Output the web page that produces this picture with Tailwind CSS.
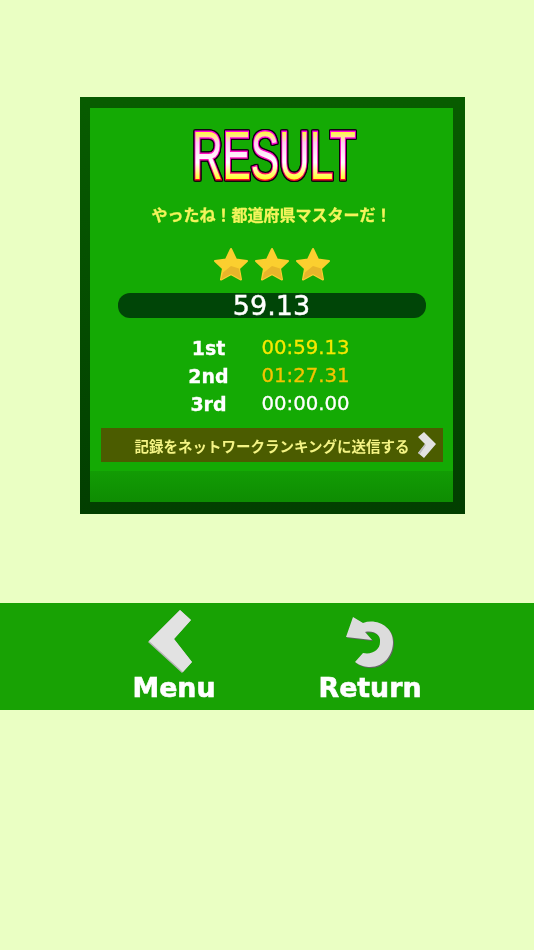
<!DOCTYPE html>
<html lang="ja">
<head>
  <meta charset="UTF-8" />
  <title>Result</title>
  <script src="https://cdn.jsdelivr.net/npm/@tailwindcss/browser@4"></script>
</head>
<body class="bg-[#eaffc3] h-[950px] overflow-hidden font-['DejaVu_Sans','Noto_Sans_CJK_JP',sans-serif]">

  <!-- Result card -->
  <div class="mt-[97px] ml-[80px] w-[385px] h-[417px] pt-[11px] pb-[12px] pl-[10px] pr-[12px] bg-gradient-to-b from-[#085c00] to-[#023e00] blur-[0.5px]">
    <div class="h-full bg-[#14aa04] flex flex-col items-center">
      <svg class="mt-[12px] overflow-visible" width="200" height="70" viewBox="0 0 200 70">
        <defs>
          <linearGradient id="fillGrad" gradientUnits="userSpaceOnUse" x1="0" y1="10" x2="0" y2="60">
            <stop offset="0" stop-color="#ffff20" />
            <stop offset="0.25" stop-color="#ffd0f0" />
            <stop offset="0.65" stop-color="#ffffff" />
            <stop offset="1" stop-color="#ffff20" />
          </linearGradient>
          <linearGradient id="strokeGrad" gradientUnits="userSpaceOnUse" x1="0" y1="10" x2="0" y2="60">
            <stop offset="0" stop-color="#ff00e0" />
            <stop offset="0.7" stop-color="#ff10b0" />
            <stop offset="1" stop-color="#ff1020" />
          </linearGradient>
        </defs>
        <text x="20" y="59" textLength="164" lengthAdjust="spacingAndGlyphs" font-family="Liberation Sans" font-size="68" fill="url(#fillGrad)" stroke="url(#strokeGrad)" stroke-width="3" paint-order="stroke" class="[filter:drop-shadow(1px_0_0_#100010)_drop-shadow(-1px_0_0_#100010)_drop-shadow(0_1px_0_#100010)_drop-shadow(0_-1px_0_#100010)]">RESULT</text>
      </svg>

      <p class="mt-[14px] h-[24px] text-[16px] leading-[24px] font-bold text-[#f4f45c] whitespace-nowrap [-webkit-text-stroke:0.3px_#f4f45c]">やったね&#xFF01;都道府県マスターだ&#xFF01;</p>

      <!-- Stars -->
      <div class="mt-[18px] flex gap-[5px] h-[36px]">
        <svg width="36" height="36" viewBox="0 0 36 36"><path d="M18 3l5 10.5 11 1.5-8 7.5 2 11-10-5.5-10 5.5 2-11-8-7.5 11-1.5z" fill="#fbcf2f" stroke="#fbcf2f" stroke-width="2" stroke-linejoin="round"/><path d="M18 20l8 2.5 2 11-10-5.5-10 5.5 2-7z" fill="#e8b52a"/></svg>
        <svg width="36" height="36" viewBox="0 0 36 36"><path d="M18 3l5 10.5 11 1.5-8 7.5 2 11-10-5.5-10 5.5 2-11-8-7.5 11-1.5z" fill="#fbcf2f" stroke="#fbcf2f" stroke-width="2" stroke-linejoin="round"/><path d="M18 20l8 2.5 2 11-10-5.5-10 5.5 2-7z" fill="#e8b52a"/></svg>
        <svg width="36" height="36" viewBox="0 0 36 36"><path d="M18 3l5 10.5 11 1.5-8 7.5 2 11-10-5.5-10 5.5 2-11-8-7.5 11-1.5z" fill="#fbcf2f" stroke="#fbcf2f" stroke-width="2" stroke-linejoin="round"/><path d="M18 20l8 2.5 2 11-10-5.5-10 5.5 2-7z" fill="#e8b52a"/></svg>
      </div>

      <!-- Time bar -->
      <div class="mt-[11px] w-[308px] h-[25px] rounded-[12px] bg-[#004507] flex items-center justify-center text-white text-[27px] leading-none [-webkit-text-stroke:0.4px_white]">59.13</div>

      <!-- Rankings -->
      <div class="mt-[16px] w-[200px] grid grid-cols-[74px_1fr] gap-x-[16px] text-[19.7px] leading-[28px] text-white [-webkit-text-stroke:0.3px]">
        <span class="text-center font-bold text-[19px]">1st</span><span class="text-[#f6e800]">00:59.13</span>
        <span class="text-center font-bold text-[19px]">2nd</span><span class="text-[#f4c400]">01:27.31</span>
        <span class="text-center font-bold text-[19px]">3rd</span><span>00:00.00</span>
      </div>

      <!-- Send button -->
      <div class="mt-[10px] w-[342px] h-[34px] bg-[#4b5c00] flex items-center justify-end pr-[6px] gap-[7px]">
        <span class="pt-[6px] text-[14.5px] font-bold text-[#f4f484] whitespace-nowrap">記録をネットワークランキングに送信する</span>
        <svg width="20" height="28" viewBox="0 0 20 28"><path d="M1 6l6-5 12 12-12 14-6-5 7-9z" fill="#e2e2e2"/><path d="M1 22l7-9 1 1-6 9z" fill="#bdbdbd"/></svg>
      </div>

      <!-- Footer strip -->
      <div class="mt-auto w-full h-[31px] bg-gradient-to-b from-[#129c04] to-[#0e8c02]"></div>
    </div>
  </div>

  <!-- Bottom nav -->
  <nav class="mt-[89px] h-[107px] bg-[#18a204] flex pl-[76px] text-white font-bold text-[26.8px] leading-none blur-[0.4px] [-webkit-text-stroke:0.6px_white]">
    <div class="w-[196px] flex flex-col items-center">
      <div class="h-[72px] pt-[5px] pr-[8px]">
        <svg width="48" height="66" viewBox="0 0 48 66"><path d="M2 34L34 2l11 10-17 19 18 23-10 11z" fill="#b5b5b5"/><path d="M3 33L34 2l11 10-17 19 18 23-9 10z" fill="#e2e2e2"/></svg>
      </div>
      <span>Menu</span>
    </div>
    <div class="w-[196px] flex flex-col items-center">
      <div class="h-[72px] pt-[12px]">
        <svg width="52" height="55" viewBox="0 0 52 55">
          <path transform="translate(1 1)" d="M9 2L2 22l26 3-7-8c9-2 16 3 15 10 0 8-8 13-17 11l-8 9c5 4 11 5 15 5 14 0 23-12 23-25C49 12 33 3 19 8z" fill="#666666"/>
          <path d="M9 2L2 22l26 3-7-8c9-2 16 3 15 10 0 8-8 13-17 11l-8 9c5 4 11 5 15 5 14 0 23-12 23-25C49 12 33 3 19 8z" fill="#dcdcdc"/>
        </svg>
      </div>
      <span class="whitespace-nowrap">Return</span>
    </div>
  </nav>
</body>
</html>
